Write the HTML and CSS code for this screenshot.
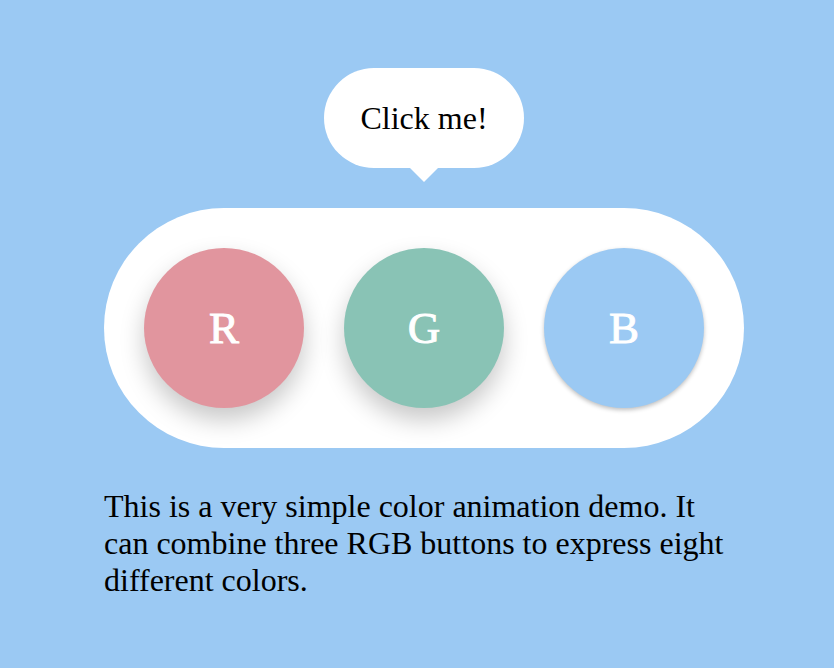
FILE: index.html
```html
<!DOCTYPE html>
<html>
<head>
<meta charset="utf-8">
<link rel="stylesheet" href="styles.css">
</head>
<body>
<main class="demo">
  <div class="tooltip">Click me!</div>
  <div class="pill">
    <button class="btn btn-r">R</button>
    <button class="btn btn-g">G</button>
    <button class="btn btn-b">B</button>
  </div>
  <p class="desc">This is a very simple color animation demo. It can combine three RGB buttons to express eight different colors.</p>
</main>
</body>
</html>
```
FILE: styles.css
```css
html, body {
  margin: 0;
  padding: 0;
}
body {
  background: #9bc9f3;
  font-family: "Liberation Serif", "Times New Roman", serif;
  color: #000;
  width: 834px;
  height: 668px;
  overflow: hidden;
}
.demo {
  width: 640px;
  padding: 68px 0 0 104px;
  display: flex;
  flex-direction: column;
}
.tooltip {
  position: relative;
  align-self: center;
  width: 200px;
  height: 100px;
  border-radius: 50px;
  background: #fff;
  font-size: 32px;
  line-height: 100px;
  text-align: center;
}
.tooltip::after {
  content: "";
  position: absolute;
  left: 86px;
  top: 100px;
  border-left: 14px solid transparent;
  border-right: 14px solid transparent;
  border-top: 14px solid #fff;
}
.pill {
  margin-top: 40px;
  height: 240px;
  box-sizing: border-box;
  padding: 40px;
  border-radius: 120px;
  background: #fff;
  display: flex;
  gap: 40px;
}
.btn {
  width: 160px;
  height: 160px;
  border: none;
  border-radius: 50%;
  padding: 0;
  color: #fff;
  font-family: "Liberation Serif", "Times New Roman", serif;
  font-size: 45px;
  font-weight: normal;
  -webkit-text-stroke: 0.9px #fff;
  line-height: 160px;
  text-align: center;
}
.btn-r {
  background: #e1959e;
  box-shadow: 0 12px 24px rgba(0, 0, 0, 0.22);
}
.btn-g {
  background: #89c3b5;
  box-shadow: 0 12px 24px rgba(0, 0, 0, 0.22);
}
.btn-b {
  background: #9bc9f3;
  box-shadow: 0 2px 4px rgba(0, 0, 0, 0.25);
}
.desc {
  margin: 40px 0 0;
  font-size: 32px;
  line-height: 1.15;
}
```
